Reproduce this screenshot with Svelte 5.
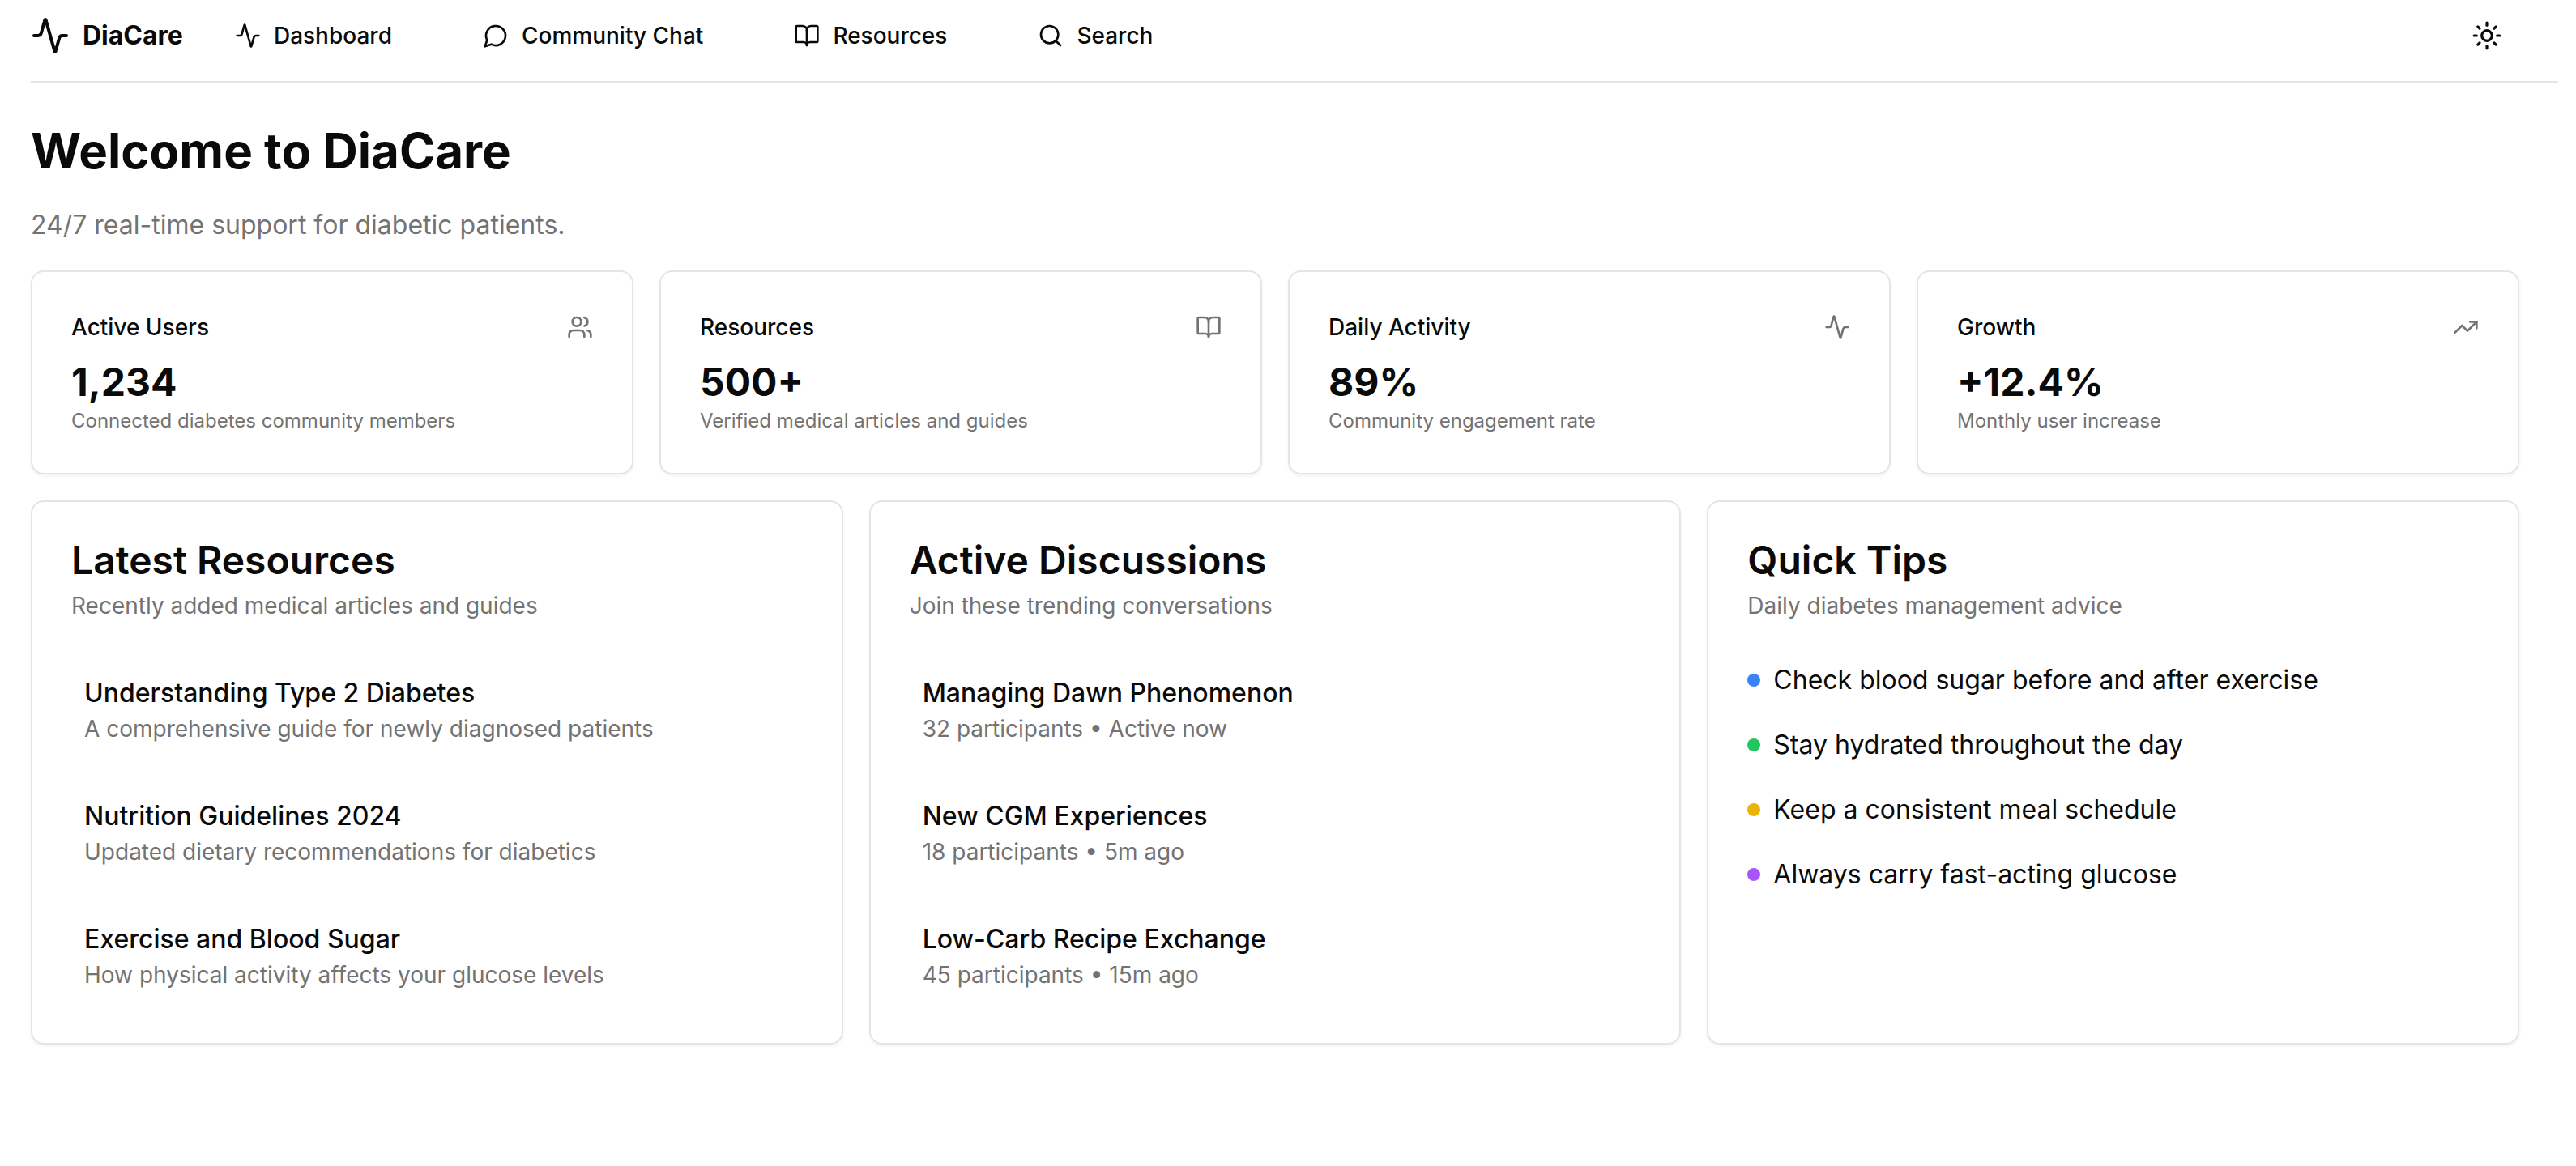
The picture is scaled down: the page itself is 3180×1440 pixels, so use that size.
<script>
  const icons = {
    activity: [
      'M22 12h-2.48a2 2 0 0 0-1.93 1.46l-2.35 8.36a.25.25 0 0 1-.48 0L9.24 2.18a.25.25 0 0 0-.48 0l-2.35 8.36A2 2 0 0 1 4.49 12H2'
    ],
    message: ['M7.9 20A9 9 0 1 0 4 16.1L2 22Z'],
    book: [
      'M12 7v14',
      'M3 18a1 1 0 0 1-1-1V4a1 1 0 0 1 1-1h5a4 4 0 0 1 4 4 4 4 0 0 1 4-4h5a1 1 0 0 1 1 1v13a1 1 0 0 1-1 1h-6a3 3 0 0 0-3 3 3 3 0 0 0-3-3z'
    ],
    search: ['M19 11a8 8 0 1 1-16 0 8 8 0 0 1 16 0z', 'm21 21-4.3-4.3'],
    users: [
      'M16 21v-2a4 4 0 0 0-4-4H6a4 4 0 0 0-4 4v2',
      'M13 7a4 4 0 1 1-8 0 4 4 0 0 1 8 0z',
      'M22 21v-2a4 4 0 0 0-3-3.87',
      'M16 3.13a4 4 0 0 1 0 7.75'
    ],
    trending: ['m22 7-8.5 8.5-5-5L2 17', 'M16 7h6v6'],
    sun: [
      'M16 12a4 4 0 1 1-8 0 4 4 0 0 1 8 0z',
      'M12 2v2',
      'M12 20v2',
      'm4.93 4.93 1.41 1.41',
      'm17.66 17.66 1.41 1.41',
      'M2 12h2',
      'M20 12h2',
      'm6.34 17.66-1.41 1.41',
      'm19.07 4.93-1.41 1.41'
    ]
  };

  const nav = [
    { label: 'Dashboard', icon: 'activity' },
    { label: 'Community Chat', icon: 'message' },
    { label: 'Resources', icon: 'book' },
    { label: 'Search', icon: 'search' }
  ];

  const stats = [
    { title: 'Active Users', value: '1,234', note: 'Connected diabetes community members', icon: 'users' },
    { title: 'Resources', value: '500+', note: 'Verified medical articles and guides', icon: 'book' },
    { title: 'Daily Activity', value: '89%', note: 'Community engagement rate', icon: 'activity' },
    { title: 'Growth', value: '+12.4%', note: 'Monthly user increase', icon: 'trending' }
  ];

  const lists = [
    {
      title: 'Latest Resources',
      description: 'Recently added medical articles and guides',
      items: [
        ['Understanding Type 2 Diabetes', 'A comprehensive guide for newly diagnosed patients'],
        ['Nutrition Guidelines 2024', 'Updated dietary recommendations for diabetics'],
        ['Exercise and Blood Sugar', 'How physical activity affects your glucose levels']
      ]
    },
    {
      title: 'Active Discussions',
      description: 'Join these trending conversations',
      items: [
        ['Managing Dawn Phenomenon', '32 participants • Active now'],
        ['New CGM Experiences', '18 participants • 5m ago'],
        ['Low-Carb Recipe Exchange', '45 participants • 15m ago']
      ]
    }
  ];

  const tips = [
    { text: 'Check blood sugar before and after exercise', tone: 'blue' },
    { text: 'Stay hydrated throughout the day', tone: 'green' },
    { text: 'Keep a consistent meal schedule', tone: 'yellow' },
    { text: 'Always carry fast-acting glucose', tone: 'purple' }
  ];
</script>

{#snippet icon(name, size)}
  <svg class="icon {size}" viewBox="0 0 24 24" aria-hidden="true">
    {#each icons[name] as d}
      <path {d} />
    {/each}
  </svg>
{/snippet}

<div class="page">
  <header>
    <a class="brand" href="#home">
      {@render icon('activity', 'large')}
      <span>DiaCare</span>
    </a>
    <nav>
      {#each nav as link}
        <a href="#{link.icon}">
          {@render icon(link.icon, 'small')}
          <span>{link.label}</span>
        </a>
      {/each}
    </nav>
    <button type="button" aria-label="Toggle theme">{@render icon('sun', 'medium')}</button>
  </header>

  <main>
    <h1>Welcome to DiaCare</h1>
    <p class="lead">24/7 real-time support for diabetic patients.</p>

    <section class="stats">
      {#each stats as stat}
        <article class="card">
          <div class="stat-head">
            <h2>{stat.title}</h2>
            {@render icon(stat.icon, 'small')}
          </div>
          <div class="value">{stat.value}</div>
          <p class="note">{stat.note}</p>
        </article>
      {/each}
    </section>

    <section class="panels">
      {#each lists as list}
        <article class="card">
          <div class="panel-head">
            <h2>{list.title}</h2>
            <p>{list.description}</p>
          </div>
          <ul>
            {#each list.items as [title, detail]}
              <li class="entry">
                <h3>{title}</h3>
                <p>{detail}</p>
              </li>
            {/each}
          </ul>
        </article>
      {/each}
      <article class="card">
        <div class="panel-head">
          <h2>Quick Tips</h2>
          <p>Daily diabetes management advice</p>
        </div>
        <ul>
          {#each tips as tip}
            <li class="tip"><span class="dot {tip.tone}"></span>{tip.text}</li>
          {/each}
        </ul>
      </article>
    </section>
  </main>
</div>

<style>
  :global(body) {
    background: #fff;
  }

  .page {
    padding: 0 22px 48px 38px;
    color: #0a0a0a;
    font-family: Inter, 'Liberation Sans', sans-serif;
    font-size: 32px;
    line-height: 48px;
    -webkit-font-smoothing: antialiased;
  }

  h1,
  h2,
  h3,
  p,
  ul {
    margin: 0;
    padding: 0;
  }

  ul {
    list-style: none;
  }

  .icon {
    flex: none;
    fill: none;
    stroke: currentColor;
    stroke-width: 2;
    stroke-linecap: round;
    stroke-linejoin: round;
  }

  .small {
    width: 32px;
    height: 32px;
  }

  .medium {
    width: 38px;
    height: 38px;
  }

  .large {
    width: 48px;
    height: 48px;
  }

  header {
    display: flex;
    align-items: center;
    gap: 64px;
    padding: 4px 48px 16px 0;
    border-bottom: 2px solid #e5e5e5;
  }

  header a {
    display: flex;
    align-items: center;
    gap: 16px;
    color: inherit;
    text-decoration: none;
    white-space: nowrap;
  }

  .brand {
    font-weight: 700;
  }

  nav {
    display: flex;
    gap: 112px;
    font-size: 28px;
    font-weight: 500;
    line-height: 40px;
  }

  button {
    display: grid;
    place-items: center;
    width: 80px;
    height: 80px;
    margin-left: auto;
    padding: 0;
    border: 0;
    border-radius: 12px;
    background: transparent;
    color: inherit;
    cursor: pointer;
  }

  main {
    display: flex;
    flex-direction: column;
    gap: 32px;
    padding: 48px 48px 0 0;
  }

  h1 {
    font-size: 60px;
    font-weight: 700;
    line-height: 72px;
  }

  .lead,
  .note,
  .panel-head p,
  .entry p {
    color: #737373;
  }

  .stats,
  .panels {
    display: grid;
    gap: 32px;
  }

  .stats {
    grid-template-columns: repeat(4, minmax(0, 1fr));
  }

  .panels {
    grid-template-columns: repeat(3, minmax(0, 1fr));
  }

  .card {
    padding: 48px;
    border: 2px solid #e5e5e5;
    border-radius: 16px;
    background: #fff;
    box-shadow: 0 2px 4px rgba(0, 0, 0, 0.05);
  }

  .stat-head {
    display: flex;
    align-items: center;
    justify-content: space-between;
    margin-bottom: 16px;
  }

  .stat-head h2 {
    font-size: 28px;
    font-weight: 500;
    line-height: 40px;
  }

  .stat-head .icon {
    color: #737373;
  }

  .value {
    font-size: 48px;
    font-weight: 700;
    line-height: 64px;
  }

  .note {
    font-size: 24px;
    line-height: 32px;
  }

  .panel-head {
    display: flex;
    flex-direction: column;
    gap: 12px;
    margin-bottom: 48px;
  }

  .panel-head h2 {
    font-size: 48px;
    font-weight: 600;
    line-height: 48px;
  }

  .panel-head p,
  .entry p {
    font-size: 28px;
    line-height: 40px;
  }

  .card ul {
    display: flex;
    flex-direction: column;
    gap: 32px;
  }

  .entry {
    padding: 16px;
  }

  .entry h3 {
    font-size: 32px;
    font-weight: 500;
    line-height: 48px;
  }

  .tip {
    display: flex;
    align-items: center;
    gap: 16px;
  }

  .dot {
    flex: none;
    width: 16px;
    height: 16px;
    border-radius: 50%;
  }

  .blue {
    background: #3b82f6;
  }

  .green {
    background: #22c55e;
  }

  .yellow {
    background: #eab308;
  }

  .purple {
    background: #a855f7;
  }
</style>
